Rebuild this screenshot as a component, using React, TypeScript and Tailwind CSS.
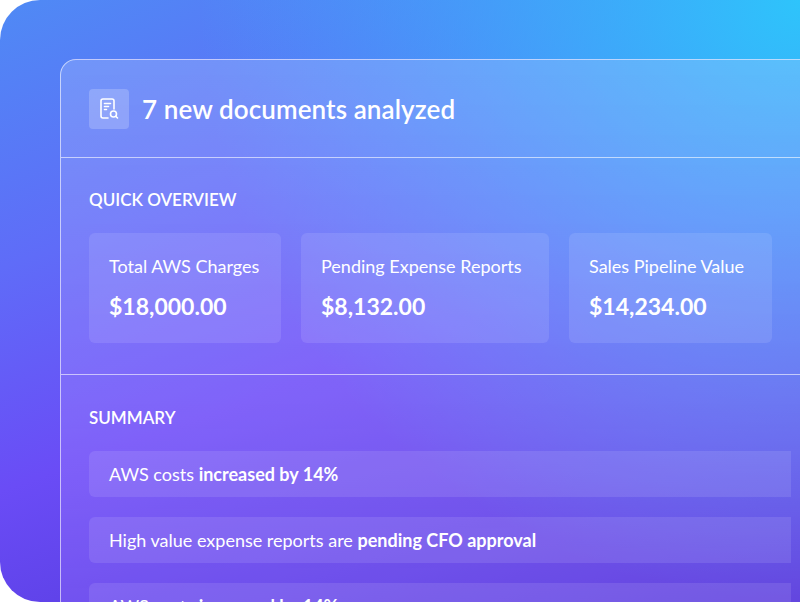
export default function App() {
  const font = { fontFamily: 'Lato, "Noto Sans", sans-serif' };
  return (
    <div className="w-[800px] h-[602px] bg-white overflow-hidden" style={font}>
      <div className="w-[800px] h-[602px] rounded-l-[40px] overflow-hidden bg-[linear-gradient(160deg,#4f8af5_0%,#5f6cf8_30%,#6a4cf6_55%,#4a30d0_100%)] relative">
        <div className="absolute inset-0 bg-[radial-gradient(circle_at_100%_0%,#2ec4fb_0%,rgba(46,196,251,0.6)_25%,rgba(46,196,251,0)_60%)]" />
        <div className="relative ml-[60px] mt-[59px] w-[760px] h-[600px] rounded-tl-[16px] border border-white/60 bg-[linear-gradient(180deg,rgba(180,200,255,0.3)_0%,rgba(170,140,255,0.35)_60%,rgba(150,110,255,0.3)_100%)] text-white">
          <div className="h-[98px] flex items-center px-[28px] border-b border-white/60">
            <div className="w-[40px] h-[40px] rounded-[4px] bg-white/20 flex items-center justify-center">
              <svg width="22" height="24" viewBox="0 0 22 24" fill="none" stroke="white" strokeWidth="1.6" strokeLinecap="round" strokeLinejoin="round">
                <path d="M10 21H5a2 2 0 0 1-2-2V4a2 2 0 0 1 2-2h9a2 2 0 0 1 2 2v8" />
                <path d="M6.5 6.5h6M6.5 9.5h4M6.5 12.5h2" />
                <circle cx="15.5" cy="17" r="3" />
                <path d="M17.8 19.3l1.7 1.7" />
              </svg>
            </div>
            <div className="ml-[13px] text-[26px] font-semibold leading-none tracking-[0.1px]">7 new documents analyzed</div>
          </div>
          <div className="h-[217px] px-[28px] pt-[33px] border-b border-white/60">
            <div className="text-[17px] font-semibold leading-none">QUICK OVERVIEW</div>
            <div className="flex gap-[20px] mt-[25px]">
              {[
                ["Total AWS Charges", "$18,000.00", "w-[192px]"],
                ["Pending Expense Reports", "$8,132.00", "w-[248px]"],
                ["Sales Pipeline Value", "$14,234.00", "w-[203px]"],
              ].map(([l, v, w]) => (
                <div key={l} className={`${w} h-[110px] rounded-[6px] bg-white/10 px-[20px] pt-[24px]`}>
                  <div className="text-[18px] leading-none whitespace-nowrap">{l}</div>
                  <div className="text-[23px] font-bold leading-none mt-[20px]">{v}</div>
                </div>
              ))}
            </div>
          </div>
          <div className="px-[28px] pt-[34px]">
            <div className="text-[17px] font-semibold leading-none">SUMMARY</div>
            <div className="flex flex-col gap-[20px] mt-[25px]">
              <div className="h-[46px] rounded-l-[6px] bg-white/10 px-[20px] flex items-center text-[18px]">AWS costs&nbsp;<b className="font-bold">increased by 14%</b></div>
              <div className="h-[46px] rounded-l-[6px] bg-white/10 px-[20px] flex items-center text-[18px]">High value expense reports are&nbsp;<b className="font-bold">pending CFO approval</b></div>
              <div className="h-[46px] rounded-l-[6px] bg-white/10 px-[20px] flex items-center text-[18px]">AWS costs&nbsp;<b className="font-bold">increased by 14%</b></div>
            </div>
          </div>
        </div>
      </div>
    </div>
  );
}
